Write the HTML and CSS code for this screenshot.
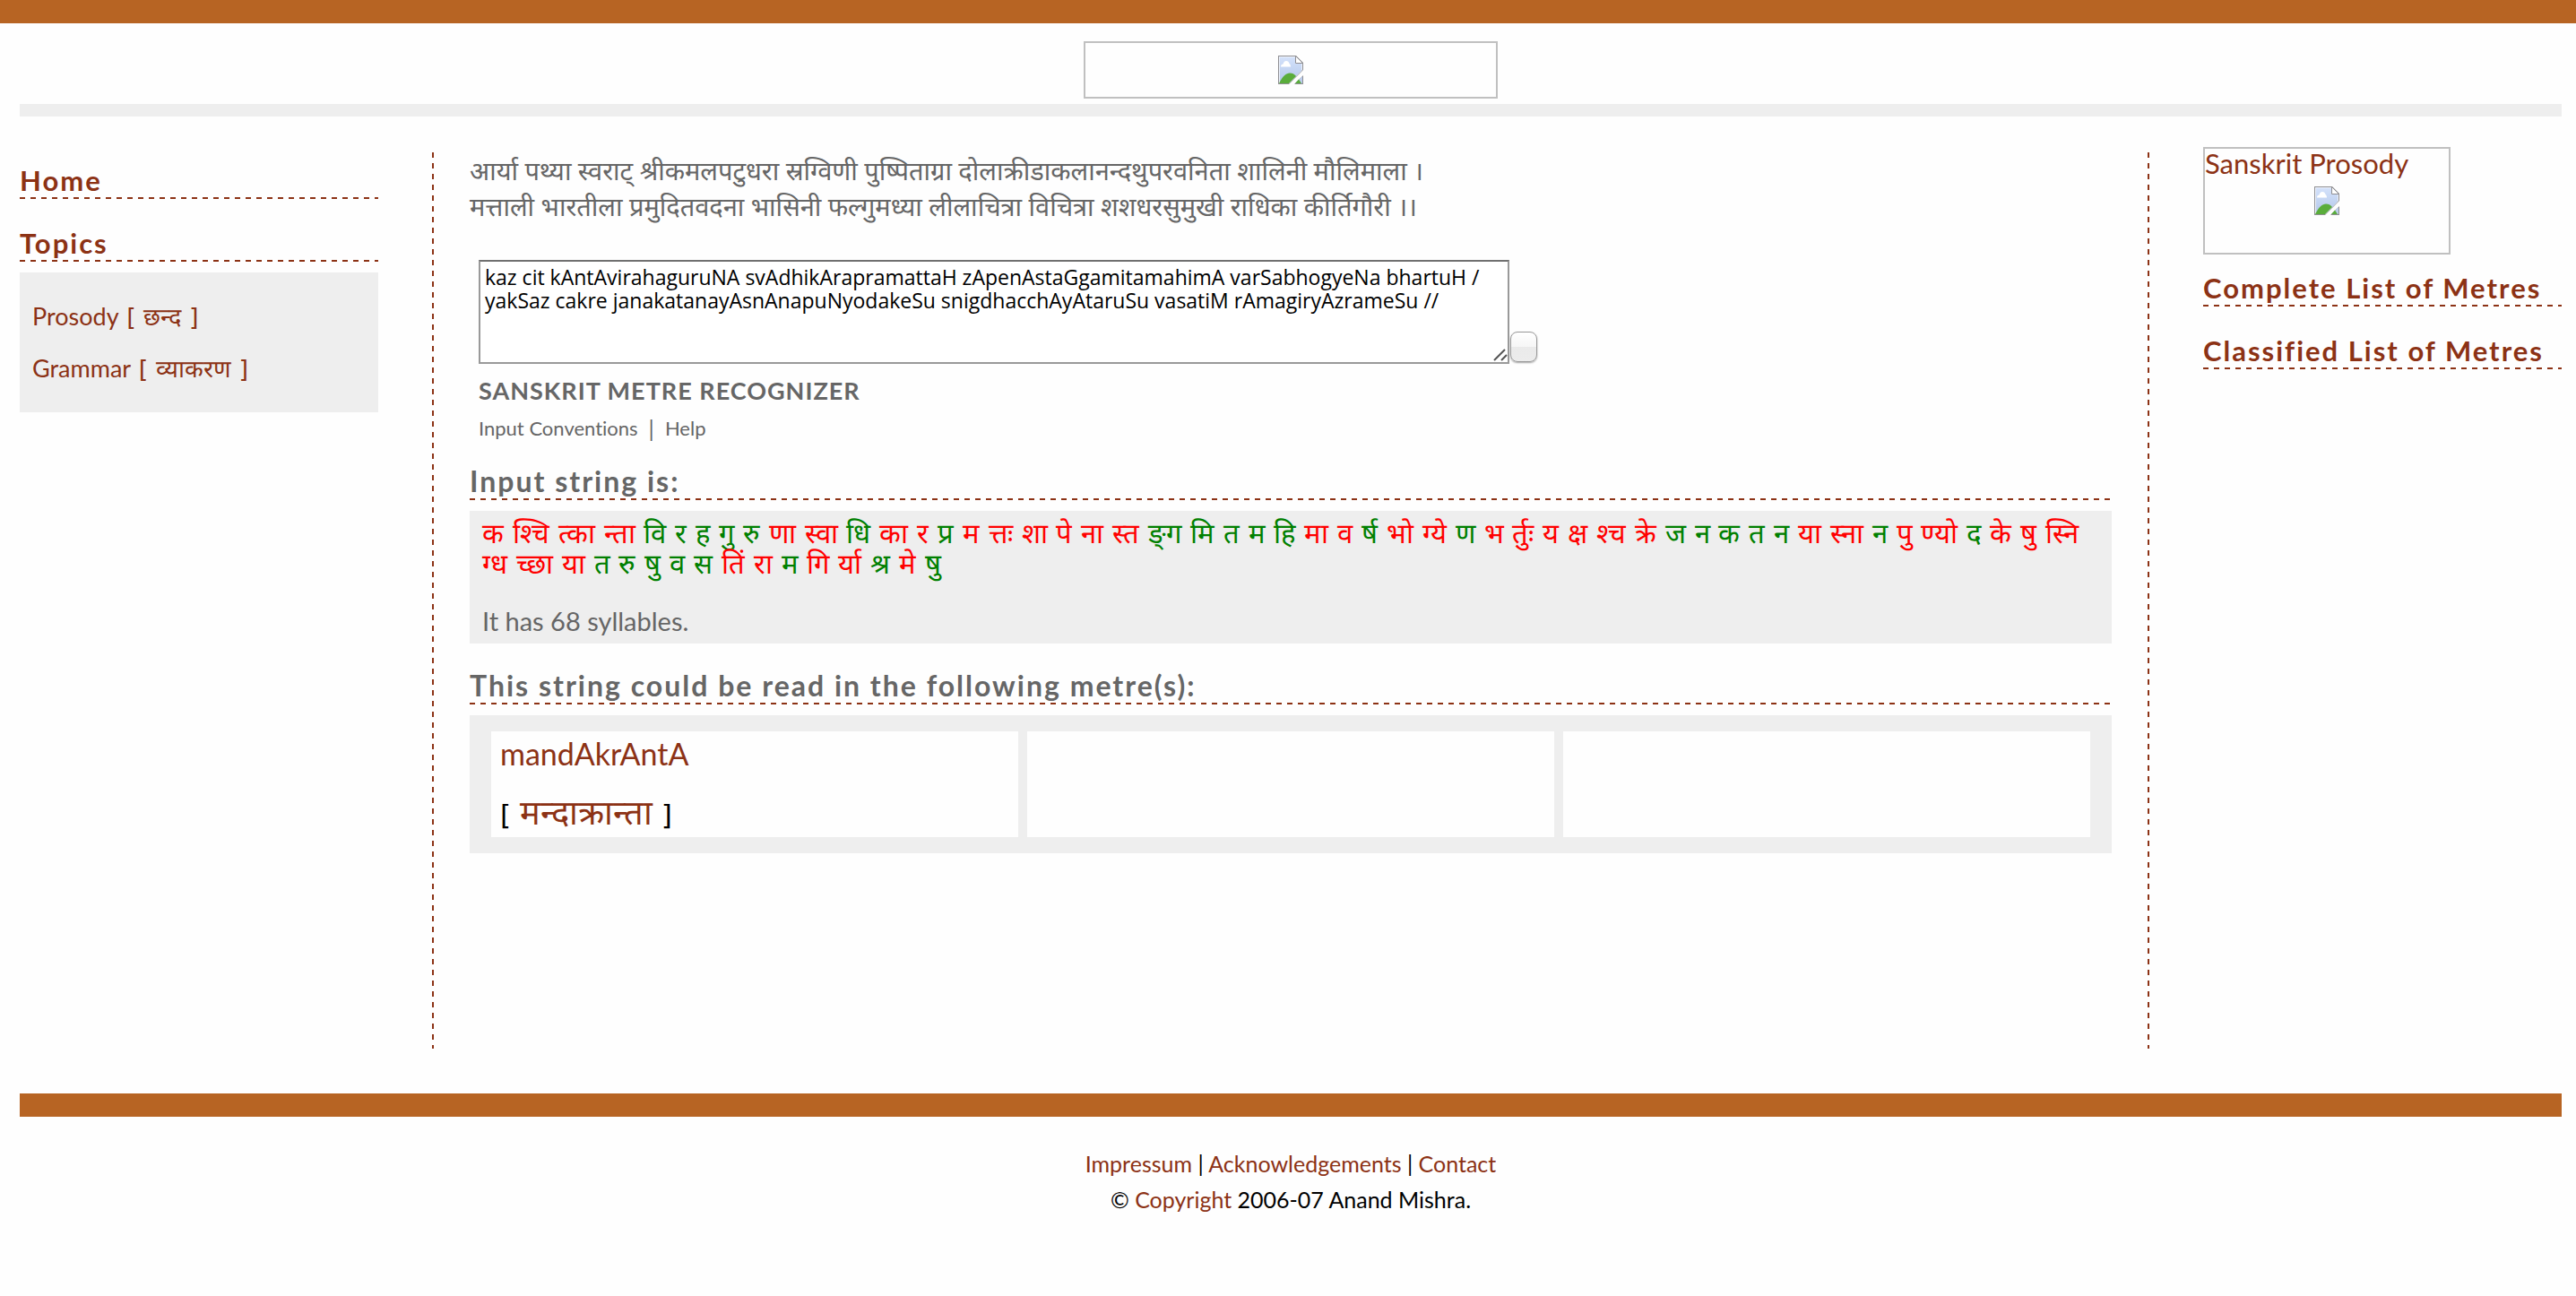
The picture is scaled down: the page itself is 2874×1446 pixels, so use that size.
FILE: index.html
```html
<!DOCTYPE html>
<html lang="en">
<head>
<meta charset="utf-8">
<title>Sanskrit Metre Recognizer</title>
<link rel="stylesheet" href="styles.css">
</head>
<body>
<svg class="defs" aria-hidden="true">
  <defs>
    <linearGradient id="sky" x1="0" y1="0" x2="0" y2="1">
      <stop offset="0" stop-color="#d3e1fa"/>
      <stop offset="1" stop-color="#b4c8ea"/>
    </linearGradient>
    <symbol id="broken" viewBox="0 0 28 32">
      <path d="M0 0H20L28 8V16L12 32H0Z" fill="#8f8f93"/>
      <path d="M28 22V32H18Z" fill="#8f8f93"/>
      <path d="M1 1H19V9H27V16L12 31H1Z" fill="#eef3fd"/>
      <path d="M2 2H19V9H26V17L13 30H2Z" fill="url(#sky)"/>
      <path d="M27 23V31H19Z" fill="#bccdec"/>
      <path d="M1 31C5 23 9 19.500 13 19.500C16 19.500 18 20.500 20 23L12 31Z" fill="#5aad3b"/>
      <path d="M19 31L23 26.500L26 31Z" fill="#5aad3b"/>
      <path d="M3 12.500C3 10.500 4 9.500 5.500 9.500C6 7 7.500 6 9 6C11 6 12 7 12.500 9C13.500 9.500 14 11 14 12.500Z" fill="#fff"/>
      <path d="M19 0V9H28" fill="#fff"/>
      <path d="M19.500 0V8.500H28M19.500 .5L27.500 8.500" fill="none" stroke="#8f8f93"/>
    </symbol>
  </defs>
</svg>

<div class="topbar"></div>
<div class="page">
  <header class="header">
    <a class="banner" href="#" aria-label="Home page"><svg class="broken"><use href="#broken"/></svg></a>
  </header>

  <div class="columns">
    <nav class="side side-left">
      <h2 class="heading"><a href="#">Home</a></h2>
      <h2 class="heading"><a href="#">Topics</a></h2>
      <ul class="panel topics">
        <li><a href="#">Prosody<span class="translit" lang="sa"> [ छन्द ]</span></a></li>
        <li><a href="#">Grammar<span class="translit" lang="sa"> [ व्याकरण ]</span></a></li>
      </ul>
    </nav>

    <main class="main">
      <p class="verse" lang="sa">आर्या पथ्या स्वराट् श्रीकमलपटुधरा स्रग्विणी पुष्पिताग्रा दोलाक्रीडाकलानन्दथुपरवनिता शालिनी मौलिमाला ।<br>मत्ताली भारतीला प्रमुदितवदना भासिनी फल्गुमध्या लीलाचित्रा विचित्रा शशधरसुमुखी राधिका कीर्तिगौरी ।।</p>

      <form class="recognizer">
        <div class="entry">
          <div class="field">
            <textarea id="verse-input" spellcheck="false">kaz cit kAntAvirahaguruNA svAdhikArapramattaH zApenAstaGgamitamahimA varSabhogyeNa bhartuH /
yakSaz cakre janakatanayAsnAnapuNyodakeSu snigdhacchAyAtaruSu vasatiM rAmagiryAzrameSu //</textarea>
            <svg class="grip" viewBox="0 0 16 16" aria-hidden="true"><path d="M1 14L13 2M9 14L15 8"/></svg>
          </div>
          <button class="submit" type="submit" aria-label="Recognize"></button>
        </div>
        <label class="caption" for="verse-input">SANSKRIT METRE RECOGNIZER</label>
        <div class="help"><a href="#">Input Conventions</a><span class="bar">|</span><a href="#">Help</a></div>
      </form>

      <h2 class="heading heading-main">Input string is:</h2>
      <div class="panel result">
        <p class="syllables" lang="sa">
          <span class="g">क</span> <span class="g">श्चि</span> <span class="g">त्का</span> <span class="g">न्ता</span> <span class="l">वि</span> <span class="l">र</span> <span class="l">ह</span> <span class="l">गु</span> <span class="l">रु</span> <span class="g">णा</span> <span class="g">स्वा</span> <span class="l">धि</span> <span class="g">का</span> <span class="g">र</span> <span class="l">प्र</span> <span class="g">म</span> <span class="g">त्तः</span> <span class="g">शा</span> <span class="g">पे</span> <span class="g">ना</span> <span class="g">स्त</span> <span class="l">ङ्‌ग</span> <span class="l">मि</span> <span class="l">त</span> <span class="l">म</span> <span class="l">हि</span> <span class="g">मा</span> <span class="g">व</span> <span class="l">र्ष</span> <span class="g">भो</span> <span class="g">ग्ये</span> <span class="l">ण</span> <span class="g">भ</span> <span class="g">र्तुः</span> <span class="g">य</span> <span class="g">क्ष</span> <span class="g">श्च</span> <span class="g">क्रे</span> <span class="l">ज</span> <span class="l">न</span> <span class="l">क</span> <span class="l">त</span> <span class="l">न</span> <span class="g">या</span> <span class="g">स्ना</span> <span class="l">न</span> <span class="g">पु</span> <span class="g">ण्यो</span> <span class="l">द</span> <span class="g">के</span> <span class="g">षु</span> <span class="g">स्नि</span><br>
          <span class="g">ग्ध</span> <span class="g">च्छा</span> <span class="g">या</span> <span class="l">त</span> <span class="l">रु</span> <span class="l">षु</span> <span class="l">व</span> <span class="l">स</span> <span class="g">तिं</span> <span class="g">रा</span> <span class="l">म</span> <span class="g">गि</span> <span class="g">र्या</span> <span class="l">श्र</span> <span class="g">मे</span> <span class="l">षु</span>
        </p>
        <p class="count">It has 68 syllables.</p>
      </div>

      <h2 class="heading heading-main">This string could be read in the following metre(s):</h2>
      <div class="panel metres">
        <div class="metre">
          <a href="#">mandAkrAntA</a>
          <p class="translit">[ <a class="metre-name" href="#" lang="sa">मन्दाक्रान्ता</a> ]</p>
        </div>
        <div class="metre"></div>
        <div class="metre"></div>
      </div>
    </main>

    <aside class="side">
      <a class="promo" href="#">Sanskrit Prosody<svg class="broken"><use href="#broken"/></svg></a>
      <h2 class="heading"><a href="#">Complete List of Metres</a></h2>
      <h2 class="heading"><a href="#">Classified List of Metres</a></h2>
    </aside>
  </div>

  <footer class="footer">
    <p><a href="#">Impressum</a> | <a href="#">Acknowledgements</a> | <a href="#">Contact</a></p>
    <p>© <a href="#">Copyright</a> 2006-07 Anand Mishra.</p>
  </footer>
</div>
</body>
</html>
```
FILE: styles.css
```css
* {
  box-sizing: border-box;
}

body,
h2,
p,
ul {
  margin: 0;
  padding: 0;
}

body {
  background: #fefefe;
  color: #000;
  font: 25px/40px Lato, "Noto Sans", sans-serif;
  font-variant-ligatures: no-common-ligatures;
}

a {
  color: #8c3215;
  text-decoration: none;
}

.defs {
  position: absolute;
  width: 0;
  height: 0;
}

.broken {
  display: block;
  width: 28px;
  height: 32px;
}

.topbar {
  height: 26px;
  background: #b76423;
}

.page {
  padding: 20px 16px 48px 22px;
}

.header {
  padding-bottom: 6px;
  border-bottom: 14px solid #eee;
}

.banner {
  display: flex;
  align-items: center;
  justify-content: center;
  width: 462px;
  height: 64px;
  margin: 0 auto;
  border: 2px solid #c0c0c0;
}

.columns {
  display: grid;
  grid-template-columns: 400px minmax(0, 1fr) 400px;
  gap: 60px;
  padding: 34px 0 50px;
}

.side-left {
  padding-top: 18px;
}

/* dashed rules: 6px dash, 6px gap, 2px thick */
.heading {
  padding-bottom: 2px;
  background: repeating-linear-gradient(90deg, #8c3215 0 6px, transparent 6px 12px) bottom / 100% 2px no-repeat;
  font-size: 31px;
  font-weight: 700;
  line-height: 38px;
  letter-spacing: 2px;
  white-space: nowrap;
}

.heading + .heading {
  margin-top: 30px;
}

.panel {
  margin-top: 12px;
  background: #eee;
}

.topics {
  padding: 20px 14px;
  font-size: 27px;
  line-height: 58px;
  list-style: none;
}

.translit {
  font-family: "DejaVu Sans", sans-serif;
}

.topics .translit {
  line-height: 1;
}

.main {
  min-height: 1000px;
  margin-top: 6px;
  padding: 0 42px;
  background:
    repeating-linear-gradient(#8c3215 0 6px, transparent 6px 12px) left / 2px 100% no-repeat,
    repeating-linear-gradient(#8c3215 0 6px, transparent 6px 12px) right / 2px 100% no-repeat;
  color: #666;
}

.verse {
  font-size: 29px;
}

.recognizer {
  margin: 40px 0 20px;
  padding-left: 10px;
}

.entry {
  display: flex;
  align-items: flex-end;
  gap: 1px;
}

.field {
  position: relative;
  flex: 0 1 1150px;
}

textarea {
  display: block;
  width: 100%;
  height: 116px;
  padding: 4px 5px;
  border: 2px solid #999;
  border-top-color: #707070;
  background: #fff;
  color: #000;
  font: 23px/26px "Open Sans", "Noto Sans", sans-serif;
  resize: none;
}

.grip {
  position: absolute;
  right: 2px;
  bottom: 2px;
  width: 16px;
  height: 16px;
  fill: none;
  stroke: #555;
  stroke-width: 2;
  pointer-events: none;
}

.submit {
  width: 30px;
  height: 34px;
  margin-bottom: 2px;
  padding: 0;
  border: 1px solid #999;
  border-radius: 8px;
  background: linear-gradient(#fff 0, #f6f6f6 50%, #eaeaea 50%, #ececec 100%);
  box-shadow: 0 1px 2px rgba(0, 0, 0, .35);
}

.caption {
  display: block;
  margin: 10px 0 2px;
  font-size: 27px;
  font-weight: 700;
  letter-spacing: 1px;
}

.help {
  display: flex;
  gap: 12px;
  font-size: 22px;
}

.help a {
  color: inherit;
}

.bar {
  font-size: 25px;
}

.heading-main {
  font-size: 32px;
}

.result {
  margin-bottom: 28px;
  padding: 8px 14px;
  font-size: 29px;
  line-height: 34px;
}

.syllables {
  margin-bottom: 30px;
  font-family: "DejaVu Sans", sans-serif;
  font-size: 31px;
}

.g {
  color: #f00;
}

.l {
  color: #008000;
}

.metres {
  display: grid;
  grid-template-columns: repeat(3, 1fr);
  gap: 10px;
  padding: 18px 24px;
}

.metre {
  display: flex;
  flex-direction: column;
  gap: 27px;
  padding: 5px 10px;
  background: #fefefe;
  color: #000;
  font-size: 34px;
}

.metre .translit {
  font-size: 31px;
}

.metre-name {
  font-size: 38px;
  line-height: 1;
}

.promo {
  display: flex;
  flex-direction: column;
  gap: 10px;
  width: 276px;
  height: 120px;
  margin-bottom: 18px;
  border: 2px solid #c0c0c0;
  font-size: 31px;
  line-height: 32px;
}

.promo .broken {
  align-self: center;
}

.footer {
  padding-top: 32px;
  border-top: 26px solid #b76423;
  text-align: center;
}
```
